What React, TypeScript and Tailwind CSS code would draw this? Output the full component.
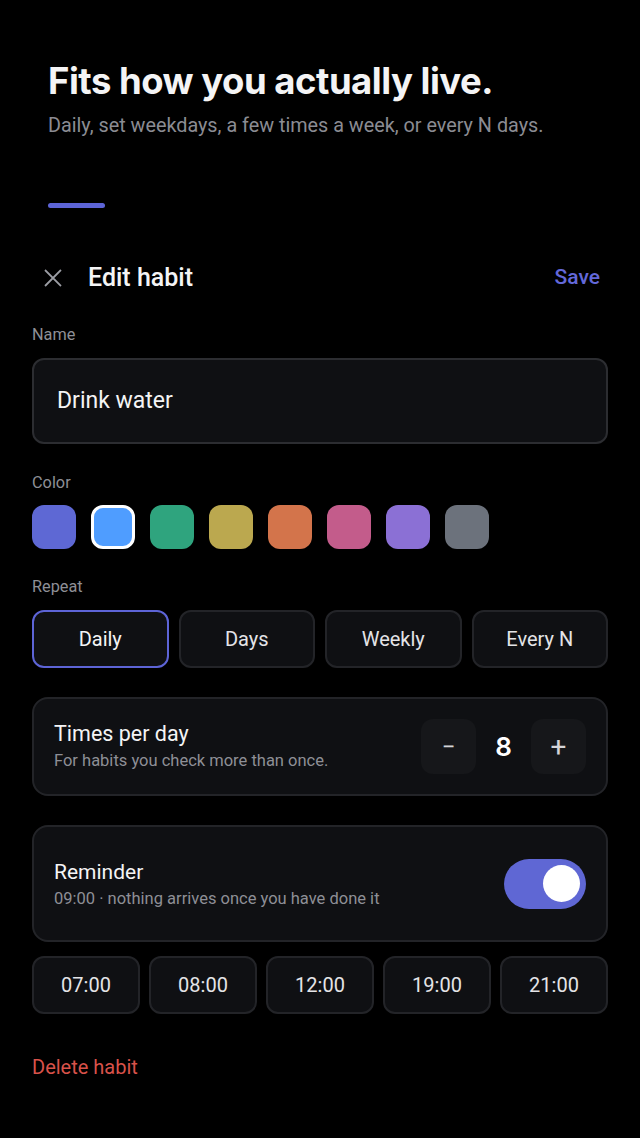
import React from "react";

const swatches = ["#5e68d4", "#4f9dff", "#2fa47e", "#bba84f", "#d3744b", "#c35c8b", "#8b70d5", "#6c727c"];
const repeats = ["Daily", "Days", "Weekly", "Every N"];
const times = ["07:00", "08:00", "12:00", "19:00", "21:00"];

export default function App() {
  return (
    <div className="min-h-[1138px] bg-black text-white" style={{ fontFamily: "Roboto, 'Noto Sans', sans-serif" }}>
      <div className="px-[48px] pt-[59px]">
        <h1 className="text-[36.5px] font-bold leading-[44px] tracking-[-0.5px] text-[#f4f4f5]" style={{ fontFamily: "Inter, 'Noto Sans', sans-serif" }}>
          Fits how you actually live.
        </h1>
        <p className="mt-[9px] text-[19.8px] leading-[28px] text-[#8b8c93]">Daily, set weekdays, a few times a week, or every N days.</p>
        <div className="mt-[63px] h-[5px] w-[57px] rounded-full bg-[#5d64d6]" />
      </div>

      <div className="px-[32px]">
        <div className="mt-[46px] flex h-[48px] items-center justify-between">
          <div className="flex items-center">
            <svg width="22" height="22" viewBox="0 0 24 24" className="ml-[10px] text-[#9c9ea5]" fill="none" stroke="currentColor" strokeWidth="2" strokeLinecap="square">
              <path d="M4 4L20 20M20 4L4 20" />
            </svg>
            <span className="ml-[24px] text-[25px] font-medium text-[#f4f4f5]">Edit habit</span>
          </div>
          <span className="mr-[8px] text-[21px] font-medium text-[#6368d9]">Save</span>
        </div>

        <div className="mt-[23px] text-[16.3px] leading-[20px] text-[#8e8f96]">Name</div>
        <div className="mt-[13px] flex h-[86px] items-center rounded-[12px] border-2 border-[#2c2d31] bg-[#0f1013] px-[23px] text-[23px] text-[#f4f4f5]">
          Drink water
        </div>

        <div className="mt-[29px] text-[16.3px] leading-[20px] text-[#8e8f96]">Color</div>
        <div className="mt-[12px] flex gap-[15px]">
          {swatches.map((c, i) => (
            <div
              key={c}
              className={i === 1 ? "h-[44px] w-[44px] rounded-[12px] border-[3px] border-white" : "h-[44px] w-[44px] rounded-[12px]"}
              style={{ backgroundColor: c }}
            />
          ))}
        </div>

        <div className="mt-[28px] text-[16.3px] leading-[20px] text-[#8e8f96]">Repeat</div>
        <div className="mt-[13px] grid grid-cols-4 gap-[10px]">
          {repeats.map((r, i) => (
            <div
              key={r}
              className={
                i === 0
                  ? "flex h-[58px] items-center justify-center rounded-[12px] border-2 border-[#5d64d6] bg-[#0f1013] text-[20px] text-[#f4f4f5]"
                  : "flex h-[58px] items-center justify-center rounded-[12px] border-2 border-[#232428] bg-[#0f1013] text-[20px] text-[#e4e4e7]"
              }
            >
              {r}
            </div>
          ))}
        </div>

        <div className="mt-[29px] flex h-[99px] items-center justify-between rounded-[16px] border-2 border-[#232428] bg-[#0f1013] pl-[20px] pr-[20px]">
          <div>
            <div className="text-[21.5px] leading-[26px] text-[#f4f4f5]">Times per day</div>
            <div className="mt-[3px] text-[16.5px] leading-[22px] text-[#8e8f96]">For habits you check more than once.</div>
          </div>
          <div className="flex items-center">
            <div className="flex h-[55px] w-[55px] items-center justify-center rounded-[12px] bg-[#16171a] text-[24px] text-[#d4d4d8]">−</div>
            <div className="w-[55px] text-center text-[26px] font-semibold text-white" style={{ fontFamily: "Inter, sans-serif" }}>8</div>
            <div className="flex h-[55px] w-[55px] items-center justify-center rounded-[12px] bg-[#16171a] text-[28px] text-[#d4d4d8]">+</div>
          </div>
        </div>

        <div className="mt-[29px] flex h-[117px] items-center justify-between rounded-[16px] border-2 border-[#232428] bg-[#0f1013] pl-[20px] pr-[20px]">
          <div>
            <div className="text-[21px] leading-[28px] text-[#f4f4f5]">Reminder</div>
            <div className="mt-[2px] text-[16.5px] leading-[22px] text-[#8e8f96]">09:00 · nothing arrives once you have done it</div>
          </div>
          <div className="flex h-[50px] w-[82px] items-center justify-end rounded-full bg-[#5f67d4] pr-[6px]">
            <div className="h-[37px] w-[37px] rounded-full bg-white" />
          </div>
        </div>

        <div className="mt-[14px] grid grid-cols-5 gap-[9px]">
          {times.map((t) => (
            <div key={t} className="flex h-[58px] items-center justify-center rounded-[12px] border-2 border-[#232428] bg-[#0f1013] text-[20px] text-[#e4e4e7]">
              {t}
            </div>
          ))}
        </div>

        <div className="mt-[41px] text-[20px] leading-[24px] text-[#d9524a]">Delete habit</div>
      </div>
    </div>
  );
}
